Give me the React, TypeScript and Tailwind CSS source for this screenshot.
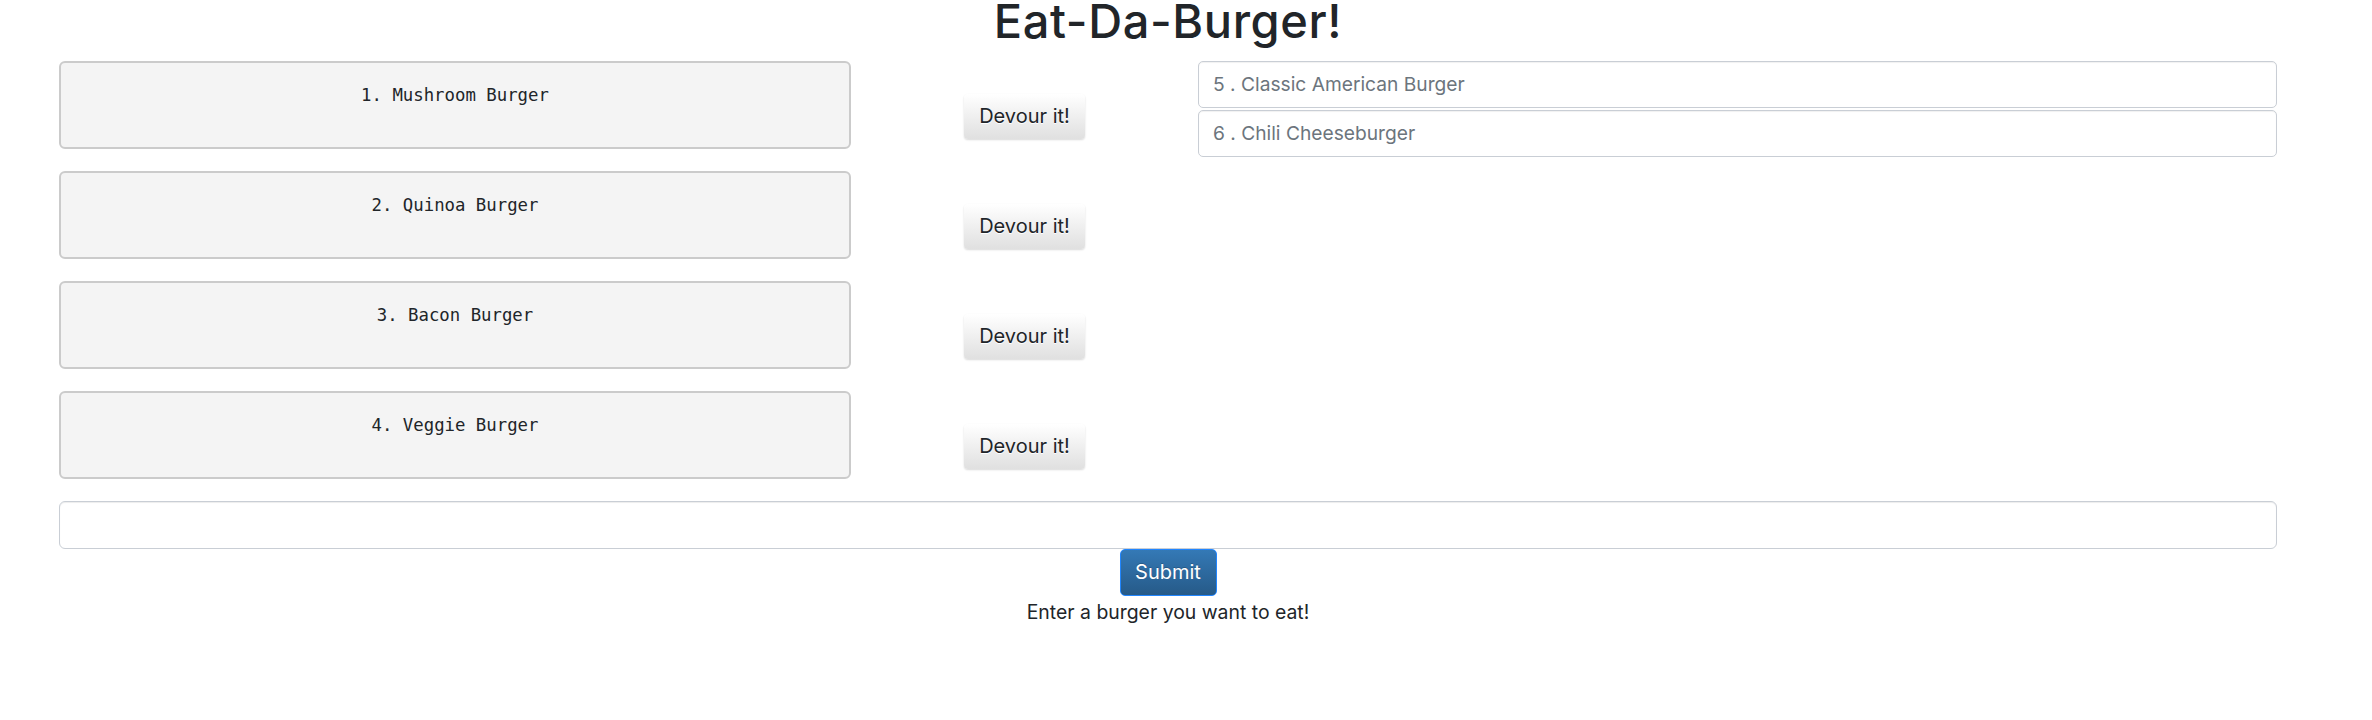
import React from "react";

const cards = ["1. Mushroom Burger", "2. Quinoa Burger", "3. Bacon Burger", "4. Veggie Burger"];
const eaten = ["5 . Classic American Burger", "6 . Chili Cheeseburger"];

export default function App() {
  return (
    <div className="h-[720px] w-[2372px] bg-white font-['Inter',sans-serif] text-[#212529]">
      <div className="ml-[59px] w-[2218px]">
        <h1 className="mb-[18.7px] text-center text-[47px] font-medium leading-[42px] tracking-[0.6px]">Eat-Da-Burger!</h1>
        <div className="flex">
          <div className="flex w-[1139px] flex-col gap-[22px]">
            {cards.map((c) => (
              <div key={c} className="flex items-start">
                <div className="h-[88px] w-[792px] rounded-[6px] border-2 border-[#cbcbcb] bg-[#f4f4f4] pt-[19px] text-center font-['DejaVu_Sans_Mono',monospace] text-[17.33px] leading-[26px] whitespace-pre">
                  {c}
                </div>
                <div className="flex flex-1 justify-center pt-[33px]">
                  <button className="flex h-[45px] w-[121px] items-center justify-center rounded-[4px] bg-linear-to-b from-white to-[#e0e0e0] text-[20px] text-[#212529] shadow-[0_1px_2px_rgba(0,0,0,0.15)] [text-shadow:0_1px_0_#fff]">
                    Devour it!
                  </button>
                </div>
              </div>
            ))}
          </div>
          <div className="flex flex-1 flex-col gap-[2px]">
            {eaten.map((e) => (
              <div
                key={e}
                className="flex h-[47px] items-center rounded-[5px] border-[1.5px] border-[#c9ced5] px-[14px] text-[19.2px] text-[#6c757d] shadow-[inset_0_1px_1px_rgba(0,0,0,0.06)]"
              >
                {e}
              </div>
            ))}
          </div>
        </div>
        <div className="mt-[22px] h-[48px] rounded-[6px] border-[1.5px] border-[#c9ced5] shadow-[inset_0_1px_1px_rgba(0,0,0,0.075)]" />
        <div className="flex flex-col items-center">
          <button className="flex h-[47px] w-[97px] items-center justify-center rounded-[5px] border-[1.5px] border-[#2186ff] bg-linear-to-b from-[#3479b6] to-[#265a88] text-[20px] text-white [text-shadow:0_-1px_0_rgba(0,0,0,0.2)]">
            Submit
          </button>
          <p className="mt-[1px] text-[19.4px] leading-[30px]">Enter a burger you want to eat!</p>
        </div>
      </div>
    </div>
  );
}
